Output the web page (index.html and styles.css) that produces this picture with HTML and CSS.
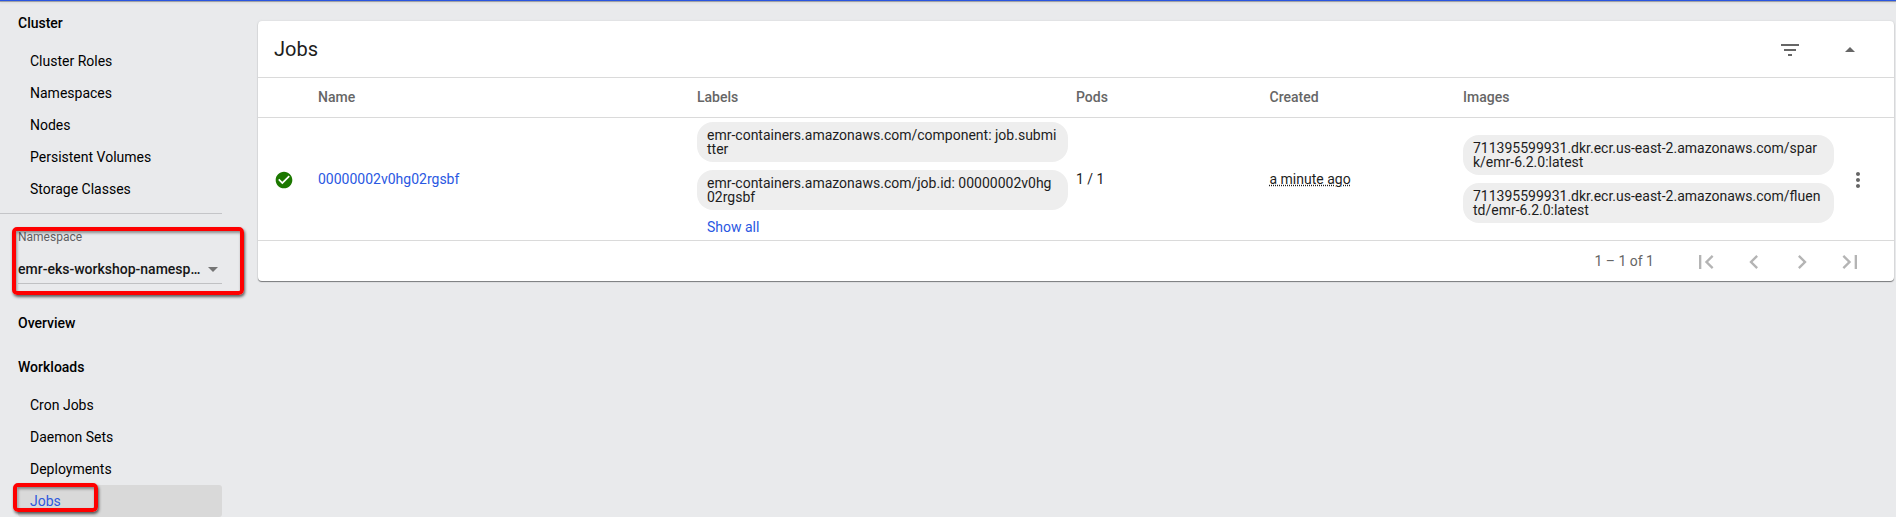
FILE: index.html
```html
<!DOCTYPE html>
<html lang="en">
<head>
<meta charset="utf-8">
<title>Jobs</title>
<link rel="stylesheet" href="styles.css">
</head>
<body>
<header class="topbar"></header>
<div class="shell">
  <nav class="sidebar">
    <div class="group">Cluster</div>
    <a class="item">Cluster Roles</a>
    <a class="item">Namespaces</a>
    <a class="item">Nodes</a>
    <a class="item">Persistent Volumes</a>
    <a class="item">Storage Classes</a>
    <div class="divider"></div>
    <div class="namespace">
      <div class="ns-label">Namespace</div>
      <div class="ns-value"><span>emr-eks-workshop-namesp…</span><i class="arrow"></i></div>
      <div class="mark mark-namespace"></div>
    </div>
    <div class="group overview">Overview</div>
    <div class="group workloads">Workloads</div>
    <a class="item">Cron Jobs</a>
    <a class="item">Daemon Sets</a>
    <a class="item">Deployments</a>
    <a class="item active">Jobs<span class="mark mark-jobs"></span></a>
  </nav>
  <main class="card">
    <div class="card-head">
      <h1>Jobs</h1>
      <svg class="filter" width="24" height="24" viewBox="0 0 24 24"><path d="M10 18h4v-2h-4v2zM3 6v2h18V6H3zm3 7h12v-2H6v2z"/></svg>
      <svg class="collapse" width="24" height="24" viewBox="0 0 24 24"><path d="M7 14l5-5 5 5z"/></svg>
    </div>
    <div class="row row-head">
      <span></span><span>Name</span><span>Labels</span><span>Pods</span><span>Created</span><span>Images</span><span></span>
    </div>
    <div class="row row-body">
      <svg class="status" width="20" height="20" viewBox="0 0 24 24"><path d="M12 2C6.480 2 2 6.480 2 12s4.480 10 10 10 10-4.480 10-10S17.520 2 12 2zm-2 15l-5-5 1.410-1.410L10 14.170l7.590-7.590L19 8l-9 9z"/></svg>
      <a class="link name">00000002v0hg02rgsbf</a>
      <div class="chips labels">
        <div class="chip">emr-containers.amazonaws.com/component: job.submi<br>tter</div>
        <div class="chip">emr-containers.amazonaws.com/job.id: 00000002v0hg<br>02rgsbf</div>
        <a class="link show-all">Show all</a>
      </div>
      <span class="cell">1 / 1</span>
      <span class="cell"><span class="age">a minute ago</span></span>
      <div class="chips">
        <div class="chip">711395599931.dkr.ecr.us-east-2.amazonaws.com/spar<br>k/emr-6.2.0:latest</div>
        <div class="chip">711395599931.dkr.ecr.us-east-2.amazonaws.com/fluen<br>td/emr-6.2.0:latest</div>
      </div>
      <svg class="more" width="24" height="24" viewBox="0 0 24 24"><path d="M12 8c1.100 0 2-.9 2-2s-.9-2-2-2-2 .9-2 2 .9 2 2 2zm0 2c-1.100 0-2 .9-2 2s.9 2 2 2 2-.9 2-2-.9-2-2-2zm0 6c-1.100 0-2 .9-2 2s.9 2 2 2 2-.9 2-2-.9-2-2-2z"/></svg>
    </div>
    <div class="pager">
      <span class="range">1 – 1 of 1</span>
      <svg width="28" height="28" viewBox="0 0 24 24"><path d="M18.410 16.590L13.820 12l4.590-4.590L17 6l-6 6 6 6zM6 6h2v12H6z"/></svg>
      <svg width="28" height="28" viewBox="0 0 24 24"><path d="M15.410 7.410L14 6l-6 6 6 6 1.410-1.410L10.830 12z"/></svg>
      <svg width="28" height="28" viewBox="0 0 24 24"><path d="M10 6L8.590 7.410 13.170 12l-4.580 4.590L10 18l6-6z"/></svg>
      <svg width="28" height="28" viewBox="0 0 24 24"><path d="M5.590 7.410L10.180 12l-4.590 4.590L7 18l6-6-6-6zM16 6h2v12h-2z"/></svg>
    </div>
  </main>
</div>
</body>
</html>
```
FILE: styles.css
```css
* { box-sizing: border-box; }
body {
  margin: 0;
  height: 517px;
  overflow: hidden;
  background: #e9eaec;
  color: #000;
  font: 14px/20px Roboto, sans-serif;
}
.topbar { height: 1px; background: #2a56e0; box-shadow: 0 1px 0 #a0a1a5, 0 2px 2px #d2d3d6; }
.shell { display: flex; align-items: flex-start; }
.sidebar { width: 258px; padding-top: 6px; }
.group { height: 32px; padding-left: 18px; font-weight: 500; line-height: 32px; }
.group + .item { margin-top: 6px; }
.item {
  position: relative;
  display: block;
  width: 204px;
  height: 32px;
  margin-left: 18px;
  padding-left: 12px;
  line-height: 32px;
}
.item.active { background: #d9d9d9; color: #3059dc; border-radius: 3px; }
.divider { width: 222px; height: 1px; margin-top: 8px; background: #c4c5c8; }
.namespace { position: relative; height: 70px; width: 204px; margin-left: 18px; border-bottom: 1px solid #c0c1c3; }
.ns-label { padding-top: 13px; color: #5f6062; font-size: 12px; line-height: 20px; }
.ns-value { display: flex; align-items: center; justify-content: space-between; margin-top: 12px; padding-right: 4px; font-weight: 500; line-height: 20px; color: #161616; white-space: nowrap; }
.arrow { border: 5px solid transparent; border-top-color: #757575; border-bottom: 0; }
.mark { position: absolute; border: 4px solid #fe0000; border-radius: 5px; box-shadow: 1px 2px 3px rgba(0,0,0,.6), inset 1px 2px 3px rgba(0,0,0,.4); }
.mark-namespace { left: -6px; top: 13px; width: 232px; height: 68px; }
.mark-jobs { left: -5px; top: -2px; width: 85px; height: 29px; }
.overview { margin-top: 23px; }
.workloads { margin-top: 12px; }
.card {
  width: 1636px;
  height: 260px;
  margin-top: 20px;
  background: #fff;
  border-radius: 4px;
  box-shadow: 0 1px 1px #77787a, 0 0 2px #cfd0d2;
}
.card-head { display: flex; align-items: center; height: 57px; padding: 0 32px 0 16px; border-bottom: 1px solid #dadada; }
h1 { flex: 1; margin: 0; color: #1d1d1d; font-size: 20px; font-weight: 400; line-height: 28px; }
svg { display: block; fill: #666; }
.card-head svg, .status, .more { margin-top: 2px; }
.filter { margin-right: 36px; }
.row { display: grid; grid-template-columns: 44px 379px 379px 193.5px 193.5px 379px 1fr; align-items: center; padding-left: 16px; border-bottom: 1px solid #dadada; }
.row-head { height: 40px; padding-bottom: 1px; color: #666; font-weight: 500; }
.row-body { height: 123px; color: #1d1d1d; }
.status { fill: #1c7800; }
.link { color: #2a58e2; }
.chips { display: grid; gap: 8px; padding-right: 8px; }
.labels { align-self: start; margin-top: 4px; }
.chip { height: 40px; padding: 6px 10px; border-radius: 16px; background: #eee; line-height: 14px; white-space: nowrap; }
.show-all { padding-left: 10px; line-height: 20px; margin-top: -1px; }
.age { text-decoration: underline dotted; }
.more { margin-left: 4px; }
.pager { display: flex; align-items: center; justify-content: flex-end; height: 40px; padding-right: 30px; color: #666; }
.pager svg { margin: 2px 0 0 20px; fill: #b4b4b4; }
.pager .range + svg { margin-left: 38px; }
```
